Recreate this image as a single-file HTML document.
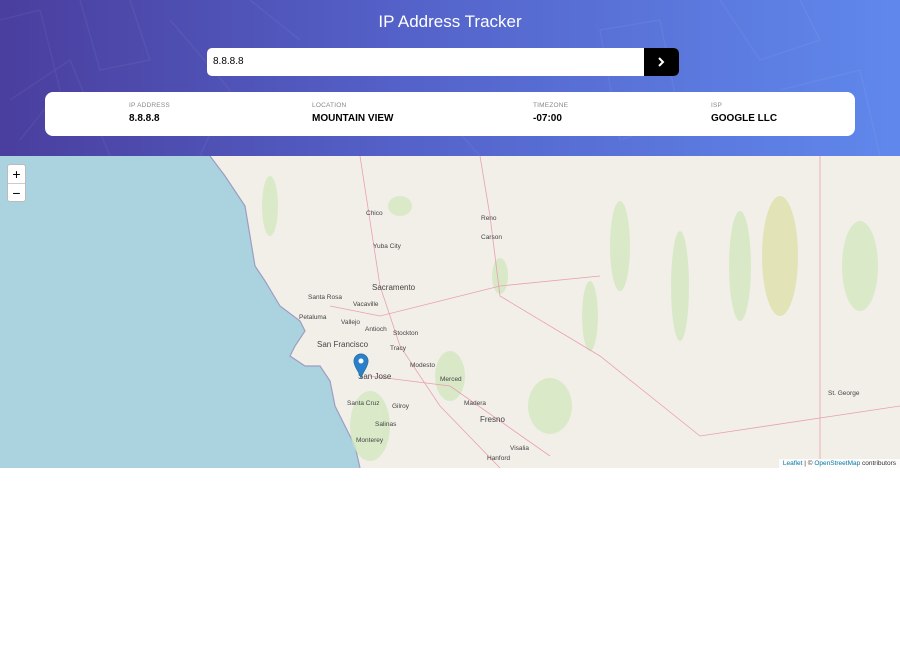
<!DOCTYPE html>
<html><head><meta charset="utf-8"><style>
*{margin:0;padding:0;box-sizing:border-box}
body{width:900px;height:668px;background:#fff;font-family:"Liberation Sans",sans-serif;overflow:hidden;position:relative}
.hdr{position:absolute;left:0;top:0;width:900px;height:156px;background:linear-gradient(90deg,#4a3e9e 0%,#5462c9 45%,#6088ec 100%);overflow:hidden}
h1{position:absolute;top:12px;width:100%;text-align:center;color:#fff;font-weight:normal;font-size:17px}
.search{position:absolute;left:207px;top:48px;width:472px;height:28px;background:#fff;border-radius:5px;overflow:hidden}
.search span{position:absolute;left:6px;top:8px;font-size:10px;color:#000}
.btn{position:absolute;right:0;top:0;width:35px;height:28px;background:#000}
.card{position:absolute;left:45px;top:92px;width:810px;height:44px;background:#fff;border-radius:8px}
.it{position:absolute;top:10px}
.it .l{font-size:6.5px;color:#888;letter-spacing:.2px}
.it .v{font-size:10px;font-weight:bold;color:#000;margin-top:4px}
.map{position:absolute;left:0;top:156px;width:900px;height:312px;background:#f2efe9;overflow:hidden}
.zoom{position:absolute;left:7px;top:8px;width:19px;height:38px;background:#fff;border:1px solid #bbb;border-radius:3px;font-size:14px;text-align:center;line-height:18px}
.zoom div:first-child{border-bottom:1px solid #ccc}
.attr{position:absolute;right:0;bottom:0;background:rgba(255,255,255,.8);font-size:6.5px;padding:1px 4px;color:#333}
.attr b{color:#0078a8;font-weight:normal}
.lbl{position:absolute;font-size:6.5px;color:#444}
</style></head><body>
<div class="hdr">
<svg width="900" height="156" style="position:absolute;left:0;top:0" fill="none" stroke="rgba(255,255,255,.05)" stroke-width="1.5">
<path d="M0 20 L40 10 L60 90 L20 140 M80 0 L100 70 L150 60 L130 0 M10 100 L70 60 L110 156 M170 20 L230 90 L200 156 M600 30 L660 20 L680 120 L620 140 Z M720 0 L760 60 L820 40 L800 0 M780 90 L860 70 L880 156 M430 100 L480 156 M250 0 L300 40"/>
</svg>
<h1>IP Address Tracker</h1>
<div class="search"><span>8.8.8.8</span><div class="btn"><svg width="35" height="28"><path d="M15 10 L19 14 L15 18" stroke="#fff" stroke-width="2" fill="none"/></svg></div></div>
<div class="card">
<div class="it" style="left:84px"><div class="l">IP ADDRESS</div><div class="v">8.8.8.8</div></div>
<div class="it" style="left:267px"><div class="l">LOCATION</div><div class="v">MOUNTAIN VIEW</div></div>
<div class="it" style="left:488px"><div class="l">TIMEZONE</div><div class="v">-07:00</div></div>
<div class="it" style="left:666px"><div class="l">ISP</div><div class="v">GOOGLE LLC</div></div>
</div>
</div>
<div class="map">
<svg width="900" height="312" style="position:absolute;left:0;top:0">
<path d="M0 0 L210 0 L225 20 L245 50 L250 80 L255 110 L265 125 L280 150 L300 165 L305 175 L295 190 L290 200 L305 210 L320 210 L330 225 L335 250 L345 270 L355 290 L360 312 L0 312 Z" fill="#aad3df"/>
<path d="M210 0 L225 20 L245 50 L250 80 L255 110 L265 125 L280 150 L300 165 L305 175 L295 190 L290 200 L305 210 L320 210 L330 225 L335 250 L345 270 L355 290 L360 312" stroke="#9d9ec0" fill="none" stroke-width="1.2"/>
<g fill="#d3e8c0" opacity=".8">
<ellipse cx="270" cy="50" rx="8" ry="30"/><ellipse cx="400" cy="50" rx="12" ry="10"/><ellipse cx="550" cy="250" rx="22" ry="28"/>
<ellipse cx="450" cy="220" rx="15" ry="25"/><ellipse cx="620" cy="90" rx="10" ry="45"/><ellipse cx="680" cy="130" rx="9" ry="55"/>
<ellipse cx="740" cy="110" rx="11" ry="55"/><ellipse cx="860" cy="110" rx="18" ry="45"/><ellipse cx="590" cy="160" rx="8" ry="35"/>
<ellipse cx="370" cy="270" rx="20" ry="35"/><ellipse cx="500" cy="120" rx="8" ry="18"/></g>
<ellipse cx="780" cy="100" rx="18" ry="60" fill="#e2e4b8"/>
<g stroke="#e9a0b0" fill="none" stroke-width=".8">
<path d="M360 0 L380 130 L400 190 L440 250 L500 312"/><path d="M480 0 L490 60 L500 140 L600 200 L700 280 L900 250"/><path d="M330 150 L380 160 L500 130 L600 120"/><path d="M370 220 L450 230 L550 300"/><path d="M820 0 L820 312"/></g>
</svg>
<div class="lbl" style="left:366px;top:54px">Chico</div><div class="lbl" style="left:481px;top:59px">Reno</div>
<div class="lbl" style="left:373px;top:87px">Yuba City</div><div class="lbl" style="left:481px;top:78px">Carson</div>
<div class="lbl" style="left:372px;top:127px;font-size:8px">Sacramento</div><div class="lbl" style="left:308px;top:138px">Santa Rosa</div>
<div class="lbl" style="left:353px;top:145px">Vacaville</div><div class="lbl" style="left:299px;top:158px">Petaluma</div>
<div class="lbl" style="left:341px;top:163px">Vallejo</div><div class="lbl" style="left:365px;top:170px">Antioch</div>
<div class="lbl" style="left:393px;top:174px">Stockton</div><div class="lbl" style="left:317px;top:184px;font-size:8px">San Francisco</div>
<div class="lbl" style="left:390px;top:189px">Tracy</div><div class="lbl" style="left:410px;top:206px">Modesto</div>
<div class="lbl" style="left:358px;top:216px;font-size:8px">San Jose</div><div class="lbl" style="left:440px;top:220px">Merced</div>
<div class="lbl" style="left:347px;top:244px">Santa Cruz</div><div class="lbl" style="left:392px;top:247px">Gilroy</div>
<div class="lbl" style="left:464px;top:244px">Madera</div><div class="lbl" style="left:480px;top:259px;font-size:8px">Fresno</div>
<div class="lbl" style="left:375px;top:265px">Salinas</div><div class="lbl" style="left:356px;top:281px">Monterey</div>
<div class="lbl" style="left:510px;top:289px">Visalia</div><div class="lbl" style="left:487px;top:299px">Hanford</div>
<div class="lbl" style="left:828px;top:234px">St. George</div>
<svg width="16" height="26" style="position:absolute;left:353px;top:197px"><path d="M8 25 C6 18 1 14 1 8 A7 7 0 0 1 15 8 C15 14 10 18 8 25 Z" fill="#2a81cb" stroke="#3074a4"/><circle cx="8" cy="8" r="2.5" fill="#fff"/></svg>
<div class="zoom"><div>+</div><div>−</div></div>
<div class="attr"><b>Leaflet</b> | © <b>OpenStreetMap</b> contributors</div>
</div>
</body></html>
